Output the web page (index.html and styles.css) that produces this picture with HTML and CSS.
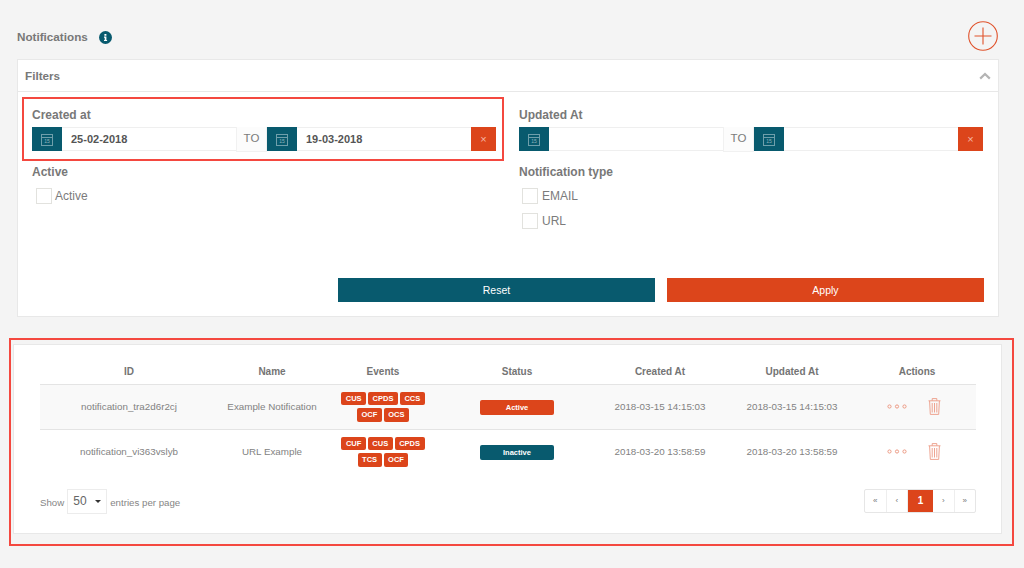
FILE: index.html
```html
<!DOCTYPE html>
<html lang="en">

<head>
    <meta charset="UTF-8">
    <title>Notifications</title>
    <link rel="stylesheet" href="styles.css">
</head>

<body>
    <svg class="sprites" width="0" height="0">
        <symbol id="trash" viewBox="0 0 13 17">
            <path d="M.5 2.8h12M4.2 2.6V.6h4.6v2M1.6 3l.7 13.4h8.4L11.4 3M4.2 5v9.5M6.5 5v9.5M8.8 5v9.5" fill="none" stroke="currentColor" stroke-width=".9"/>
        </symbol>
        <symbol id="dots" viewBox="0 0 20 5">
            <circle cx="2.5" cy="2.5" r="1.6" fill="none" stroke="currentColor"/>
            <circle cx="10" cy="2.5" r="1.6" fill="none" stroke="currentColor"/>
            <circle cx="17.5" cy="2.5" r="1.6" fill="none" stroke="currentColor"/>
        </symbol>
    </svg>

    <header class="page-head">
        <h1>Notifications</h1>
        <svg class="info" viewBox="0 0 13 13" width="13" height="13">
            <circle cx="6.5" cy="6.5" r="6.5" fill="#085a6e"/>
            <path d="M5.4 3h2v1.7h-2zM5 5.6h2.4v3.3h.7v1.1H5V8.9h.7V6.7H5z" fill="#fff"/>
        </svg>
        <svg class="add" viewBox="0 0 30 30" width="30" height="30">
            <circle cx="15" cy="15" r="14.3" fill="none" stroke="#e0522b" stroke-width="1.1"/>
            <path d="M15 6.5v17M6.5 15h17" fill="none" stroke="#e0522b" stroke-width="1.1"/>
        </svg>
    </header>

    <section class="card filters">
        <div class="filters-head">
            <h2>Filters</h2>
            <svg class="chevron" viewBox="0 0 12 8" width="12" height="8">
                <path d="M1.2 6.6 6 2l4.8 4.6" fill="none" stroke="#b4b4b4" stroke-width="2.2"/>
            </svg>
        </div>
        <div class="filters-body">
            <div class="filter-grid">
                <div class="field">
                    <label class="field-label">Created at</label>
                    <div class="range">
                        <span class="cal-btn"><i class="cal-icon">15</i></span>
                        <span class="date">25-02-2018</span>
                        <span class="to">TO</span>
                        <span class="cal-btn"><i class="cal-icon">15</i></span>
                        <span class="date">19-03-2018</span>
                        <span class="clear">×</span>
                    </div>
                </div>
                <div class="field">
                    <label class="field-label">Updated At</label>
                    <div class="range">
                        <span class="cal-btn"><i class="cal-icon">15</i></span>
                        <span class="date"></span>
                        <span class="to">TO</span>
                        <span class="cal-btn"><i class="cal-icon">15</i></span>
                        <span class="date"></span>
                        <span class="clear">×</span>
                    </div>
                </div>
                <div class="field">
                    <label class="field-label">Active</label>
                    <div class="check"><span class="box"></span>Active</div>
                </div>
                <div class="field field-type">
                    <label class="field-label">Notification type</label>
                    <div class="check"><span class="box"></span>EMAIL</div>
                    <div class="check"><span class="box"></span>URL</div>
                </div>
            </div>
            <div class="filter-actions">
                <button class="btn btn-reset">Reset</button>
                <button class="btn btn-apply">Apply</button>
            </div>
        </div>
    </section>

    <section class="card list">
        <table>
            <thead>
                <tr>
                    <th class="col-id">ID</th>
                    <th class="col-name">Name</th>
                    <th class="col-events">Events</th>
                    <th class="col-status">Status</th>
                    <th class="col-date">Created At</th>
                    <th class="col-date">Updated At</th>
                    <th class="col-actions">Actions</th>
                </tr>
            </thead>
            <tbody>
                <tr class="shaded">
                    <td>notification_tra2d6r2cj</td>
                    <td>Example Notification</td>
                    <td>
                        <div class="events">
                            <span class="tag">CUS</span><span class="tag">CPDS</span><span class="tag">CCS</span><span class="tag">OCF</span><span class="tag">OCS</span>
                        </div>
                    </td>
                    <td><span class="status active">Active</span></td>
                    <td>2018-03-15 14:15:03</td>
                    <td>2018-03-15 14:15:03</td>
                    <td>
                        <div class="row-actions">
                            <svg class="dots" width="20" height="5"><use href="#dots"/></svg>
                            <svg class="trash" width="13" height="17"><use href="#trash"/></svg>
                        </div>
                    </td>
                </tr>
                <tr>
                    <td>notification_vi363vslyb</td>
                    <td>URL Example</td>
                    <td>
                        <div class="events">
                            <span class="tag">CUF</span><span class="tag">CUS</span><span class="tag">CPDS</span><span class="tag">TCS</span><span class="tag">OCF</span>
                        </div>
                    </td>
                    <td><span class="status inactive">Inactive</span></td>
                    <td>2018-03-20 13:58:59</td>
                    <td>2018-03-20 13:58:59</td>
                    <td>
                        <div class="row-actions">
                            <svg class="dots" width="20" height="5"><use href="#dots"/></svg>
                            <svg class="trash" width="13" height="17"><use href="#trash"/></svg>
                        </div>
                    </td>
                </tr>
            </tbody>
        </table>

        <div class="list-foot">
            <div class="per-page">
                Show
                <span class="select">50<i class="caret"></i></span>
                entries per page
            </div>
            <ul class="pager">
                <li>«</li>
                <li>‹</li>
                <li class="current">1</li>
                <li>›</li>
                <li>»</li>
            </ul>
        </div>
    </section>

    <div class="mark mark-created"></div>
    <div class="mark mark-table"></div>
</body>

</html>
```

FILE: styles.css
```css
body {
    font-family: 'Liberation Sans', Arial, sans-serif;
    margin: 0;
    padding: 0;
    height: 568px;
    overflow: hidden;
    background: #f4f4f4;
    color: #7b7b7b;
    position: relative;
}

.sprites {
    position: absolute;
}

.page-head {
    display: flex;
    align-items: center;
    height: 30px;
    padding: 22px 26px 0 17px;
    margin-bottom: 8px;
}

.page-head h1 {
    margin: -2px 0 0;
    font-size: 11.7px;
    font-weight: bold;
    color: #787878;
}

.info {
    margin-left: 11px;
}

.add {
    margin-left: auto;
    margin-top: -2px;
}

.card {
    background: #fff;
    border: 1px solid #e8e8e8;
    box-sizing: border-box;
}

.filters {
    margin: -1px 25px 27px 17px;
    height: 258px;
}

.filters-head {
    display: flex;
    align-items: center;
    justify-content: space-between;
    height: 31px;
    padding: 0 7px 0 7px;
    border-bottom: 1px solid #e8e8e8;
}

.filters-head h2 {
    margin: -1px 0 0;
    font-size: 11.7px;
    color: #787878;
}

.filters-body {
    padding: 16px 15px 0 14px;
}

.filter-grid {
    display: grid;
    grid-template-columns: 464px 464px;
    column-gap: 23px;
    height: 170px;
    grid-template-rows: 44px auto;
    row-gap: 13px;
}

.field-label {
    display: block;
    font-size: 12px;
    font-weight: bold;
    line-height: 14px;
    margin-bottom: 5px;
    color: #787878;
}

.range {
    display: flex;
    height: 24px;
}

.cal-btn {
    width: 30px;
    flex: none;
    display: flex;
    align-items: center;
    justify-content: center;
    background: #085a6e;
    color: #8db4bd;
}

/* calendar glyph: box with a header row and the day number */
.cal-icon {
    display: block;
    width: 12px;
    height: 12px;
    margin-top: 1px;
    box-sizing: border-box;
    border: 1px solid #6f9fab;
    font-style: normal;
    font-size: 5px;
    line-height: 6px;
    text-align: center;
    background: linear-gradient(#6f9fab, #6f9fab) 0 2px / 100% 1px no-repeat;
    padding-top: 3px;
}

.date {
    flex: 1;
    font-size: 11px;
    font-weight: bold;
    line-height: 22px;
    padding-left: 9px;
    color: #555;
    border-top: 1px solid #efefef;
    border-bottom: 1px solid #efefef;
    box-sizing: border-box;
}

.to {
    width: 31px;
    flex: none;
    box-sizing: border-box;
    height: 25px;
    text-align: center;
    font-size: 11.5px;
    line-height: 22px;
    background: #fcfcfc;
    border: 1px solid #f1f1f1;
    border-top: none;
}

.clear {
    width: 25px;
    flex: none;
    background: #dc451b;
    color: #f6b7a4;
    text-align: center;
    font-size: 11px;
    line-height: 25px;
}

.check {
    display: flex;
    align-items: center;
    height: 16px;
    margin: 9px 0 9px 4px;
    font-size: 12px;
}

.box {
    width: 16px;
    height: 16px;
    box-sizing: border-box;
    border: 1px solid #e2e2de;
    margin-right: 3px;
    background: #fff;
}

.field-type .check {
    margin-left: 3px;
}

.field-type .box {
    margin-right: 4px;
}

.filter-actions {
    display: flex;
    justify-content: flex-end;
    gap: 12px;
    margin-right: -1px;
}

.btn {
    width: 317px;
    height: 24px;
    border: none;
    padding: 0;
    color: #fff;
    font-family: inherit;
    font-size: 10.5px;
}

.btn-reset {
    background: #085a6e;
}

.btn-apply {
    background: #dc451b;
}

.list {
    margin: 0 22px 0 13px;
    height: 190px;
    padding: 8px 26px 0;
}

table {
    width: 936px;
    border-collapse: collapse;
    table-layout: fixed;
}

th {
    height: 31px;
    font-size: 10px;
    color: #747474;
    border-bottom: 1px solid #e4e4e4;
    padding: 6px 0 0;
    box-sizing: border-box;
}

td {
    height: 44px;
    padding: 0;
    text-align: center;
    font-size: 9.8px;
    color: #828282;
    border-bottom: 1px solid #e4e4e4;
}

tbody tr:last-child td {
    border-bottom: none;
}

.shaded td {
    background: #f9f9f9;
}

.col-id {
    width: 178px;
}

.col-name {
    width: 108px;
}

.col-events {
    width: 114px;
}

.col-status {
    width: 154px;
}

.col-date {
    width: 132px;
}

.events {
    display: flex;
    flex-wrap: wrap;
    justify-content: center;
    gap: 3px 2px;
    width: 90px;
    margin: 0 auto;
}

.tag {
    background: #dc451b;
    color: #fff;
    font-size: 7.5px;
    font-weight: bold;
    line-height: 13.5px;
    height: 13.5px;
    padding: 0 4.5px;
    border-radius: 2px;
}

.status {
    display: block;
    width: 74px;
    height: 15px;
    margin: 1px auto 0;
    border-radius: 2px;
    color: #fff;
    font-size: 7.5px;
    font-weight: bold;
    line-height: 16px;
}

.status.active {
    background: #dc451b;
}

.status.inactive {
    background: #085a6e;
}

.row-actions {
    display: flex;
    align-items: center;
    justify-content: center;
    gap: 21px;
    margin: -1px 6px 0 0;
    color: #ec9a84;
}

.row-actions svg {
    flex: none;
}

.list-foot {
    display: flex;
    justify-content: space-between;
    align-items: flex-start;
    width: 936px;
    margin-top: 15px;
}

.per-page {
    display: flex;
    align-items: center;
    gap: 3px;
    font-size: 9.7px;
    height: 27px;
    color: #858585;
}

.select {
    position: relative;
    align-self: flex-start;
    width: 40px;
    height: 25px;
    box-sizing: border-box;
    border: 1px solid #ececec;
    font-size: 12px;
    line-height: 23px;
    padding-left: 5px;
    color: #666;
}

.caret {
    position: absolute;
    right: 5px;
    top: 10px;
    border-left: 3px solid transparent;
    border-right: 3px solid transparent;
    border-top: 3px solid #333;
}

.pager {
    display: flex;
    list-style-type: none;
    width: 112px;
    margin: 0;
    padding: 0;
    height: 24px;
    border: 1px solid #e6e6e6;
    border-radius: 2px;
    box-sizing: border-box;
}

.pager li {
    flex: 1;
    text-align: center;
    font-size: 8px;
    line-height: 22px;
    color: #777;
    border-right: 1px solid #eeeeee;
}

.pager li:last-child {
    border-right: none;
}

.pager .current {
    flex: none;
    width: 25px;
    background: #dc451b;
    color: #fff;
    font-size: 10px;
    font-weight: bold;
    border-right: none;
}

/* red annotation boxes drawn over the page */
.mark {
    position: absolute;
    box-sizing: border-box;
    border: 2px solid #f4483f;
    pointer-events: none;
}

.mark-created {
    left: 22px;
    top: 97px;
    width: 482px;
    height: 64px;
}

.mark-table {
    left: 9px;
    top: 338px;
    width: 1005px;
    height: 208px;
}
```
